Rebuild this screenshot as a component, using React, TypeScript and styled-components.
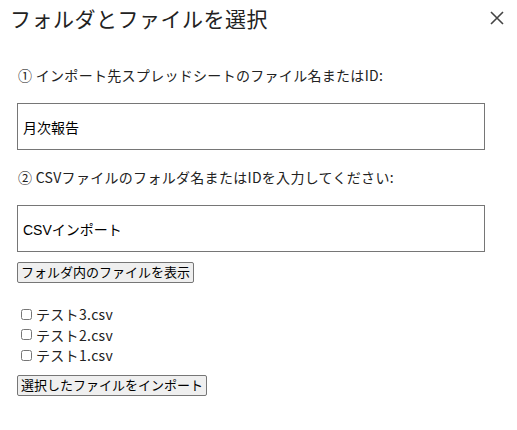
import React, { useState } from 'react';
import styled, { createGlobalStyle } from 'styled-components';

const GlobalStyle = createGlobalStyle`
  html, body {
    margin: 0;
    padding: 0;
    background: #fff;
  }
  body {
    font-family: "Noto Sans CJK JP", "Noto Sans", sans-serif;
    color: #222;
  }
`;

const Dialog = styled.div`
  width: 517px;
  height: 430px;
  box-sizing: border-box;
  background: #fff;
`;

const Header = styled.div`
  display: flex;
  justify-content: space-between;
  align-items: center;
  padding: 0 10px 0 10px;
  height: 36px;
`;

const Title = styled.h1`
  margin: 0;
  font-size: 21px;
  font-weight: 400;
  color: #222;
  letter-spacing: 0.5px;
`;

const CloseButton = styled.button`
  border: none;
  background: none;
  padding: 0;
  width: 20px;
  height: 20px;
  display: flex;
  align-items: center;
  justify-content: center;
  color: #444;
  cursor: pointer;
`;

const Body = styled.div`
  padding: 29px 0 0 17px;
  width: 468px;
`;

const Label = styled.p`
  margin: 0 0 18px 1px;
  font-size: 14px;
  line-height: 20px;
  letter-spacing: 0.3px;
  color: #222;
`;

const TextInput = styled.input<{ $gap: number }>`
  display: block;
  box-sizing: border-box;
  width: 468px;
  height: 47px;
  margin: 0 0 ${(p) => p.$gap}px;
  padding: 0 5px;
  border: 1px solid #767676;
  border-radius: 0;
  font-family: "Liberation Sans", "Noto Sans CJK JP", sans-serif;
  font-size: 14px;
  color: #000;
  outline: none;
`;

const NativeButton = styled.button`
  display: block;
  box-sizing: border-box;
  height: 21px;
  padding: 0 3px;
  border: 1px solid #767676;
  border-radius: 2px;
  background: #efefef;
  font-family: "Liberation Sans", "Noto Sans CJK JP", sans-serif;
  font-size: 13px;
  line-height: 19px;
  color: #000;
`;

const FileList = styled.div`
  display: flex;
  flex-direction: column;
  margin: 21px 0 9px 3px;
`;

const FileRow = styled.label`
  display: flex;
  align-items: center;
  height: 20.5px;
  font-size: 14px;
  letter-spacing: 0.3px;
  color: #222;

  input {
    width: 11px;
    height: 11px;
    margin: 0 4px 0 1px;
  }
`;

const files = ['テスト3.csv', 'テスト2.csv', 'テスト1.csv'];

export default function App() {
  const [sheet, setSheet] = useState('月次報告');
  const [folder, setFolder] = useState('CSVインポート');

  return (
    <>
      <GlobalStyle />
      <Dialog>
        <Header>
          <Title>フォルダとファイルを選択</Title>
          <CloseButton aria-label="close">
            <svg width="14" height="14" viewBox="0 0 14 14">
              <path d="M1 1 L13 13 M13 1 L1 13" stroke="#444" strokeWidth="1.6" />
            </svg>
          </CloseButton>
        </Header>
        <Body>
          <Label>① インポート先スプレッドシートのファイル名またはID:</Label>
          <TextInput $gap={17} value={sheet} onChange={(e) => setSheet(e.target.value)} />
          <Label>② CSVファイルのフォルダ名またはIDを入力してください:</Label>
          <TextInput $gap={10} value={folder} onChange={(e) => setFolder(e.target.value)} />
          <NativeButton>フォルダ内のファイルを表示</NativeButton>
          <FileList>
            {files.map((f) => (
              <FileRow key={f}>
                <input type="checkbox" />
                {f}
              </FileRow>
            ))}
          </FileList>
          <NativeButton>選択したファイルをインポート</NativeButton>
        </Body>
      </Dialog>
    </>
  );
}
